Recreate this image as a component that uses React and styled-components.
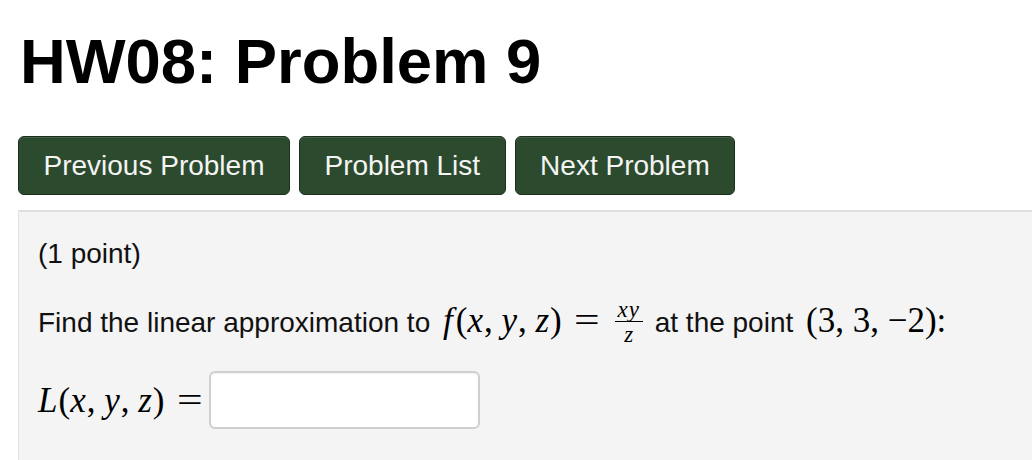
import React from "react";
import styled, { createGlobalStyle } from "styled-components";

const Global = createGlobalStyle`
  html, body { margin: 0; padding: 0; background: #ffffff; }
  body { overflow: hidden; font-family: "Liberation Sans", Arial, sans-serif; }
`;

const Page = styled.div`
  width: 1032px;
  height: 460px;
  padding-left: 18px;
  box-sizing: border-box;
  display: flex;
  flex-direction: column;
`;

const Title = styled.h1`
  margin: 29px 0 0 2px;
  font-size: 63.4px;
  line-height: 64px;
  font-weight: 700;
  color: #000;
`;

const Nav = styled.div`
  display: flex;
  gap: 9px;
  margin-top: 43px;
`;

const NavButton = styled.button`
  font-family: "Liberation Sans", Arial, sans-serif;
  font-size: 28px;
  line-height: 39px;
  height: 59px;
  padding: 9px 24.5px;
  box-sizing: border-box;
  color: #f4f4f4;
  background: #2c4a2e;
  border: 1px solid #1c301d;
  border-radius: 6px;
  box-shadow: inset 0 1px 0 rgba(255, 255, 255, 0.12);
`;

const Panel = styled.div`
  margin-top: 15px;
  flex: 1;
  background: #f4f4f4;
  border-top: 2px solid #e0e0e0;
  border-left: 1px solid #e4e4e4;
  padding: 22px 0 0 19px;
  font-size: 28px;
  line-height: 39px;
  color: #111;
`;

const Para = styled.div`
  margin-top: ${(p) => p.$mt || 0}px;
  display: flex;
  align-items: ${(p) => (p.$center ? "center" : "baseline")};
  white-space: pre;
`;

const Math = styled.span`
  font-family: "Liberation Serif", "Times New Roman", serif;
  font-size: 35px;
  color: #000;
  margin-left: ${(p) => p.$ml || 0}px;
  display: inline-flex;
  align-items: baseline;
`;

const I = styled.i`
  font-style: italic;
  margin-right: ${(p) => p.$r || 0}px;
`;

const Rel = styled.span`
  display: inline-block;
  margin: 0 ${(p) => (p.$r !== undefined ? p.$r : 14)}px 0 15px;
  transform: scaleX(1.3);
`;

const Frac = styled.span`
  display: inline-flex;
  flex-direction: column;
  align-items: center;
  font-size: 23px;
  line-height: 17px;
  margin: 0 4px 0 4px;
  transform: translateY(-15px);
`;

const Num = styled.span`
  font-style: italic;
  padding: 0 3px 3px;
  border-bottom: 1.5px solid #000;
  letter-spacing: 1px;
`;

const Den = styled.span`
  font-style: italic;
  padding-top: 4px;
`;

const AnswerInput = styled.input`
  width: 271px;
  height: 58px;
  box-sizing: border-box;
  margin-left: 0;
  background: #fff;
  border: 2px solid #cfcfcf;
  border-radius: 6px;
  box-shadow: inset 0 1px 2px rgba(0, 0, 0, 0.06);
  outline: none;
`;

const Vars = () => (
  <>
    (<I $r={1}>x</I>,<span> </span><I $r={1}>y</I>,<span> </span><I $r={1}>z</I>)
  </>
);

export default function App() {
  return (
    <>
      <Global />
      <Page>
        <Title>HW08: Problem 9</Title>
        <Nav>
          <NavButton>Previous Problem</NavButton>
          <NavButton>Problem List</NavButton>
          <NavButton>Next Problem</NavButton>
        </Nav>
        <Panel>
          <Para>(1 point)</Para>
          <Para $mt={28}>
            <span>Find the linear approximation to </span>
            <Math $ml={5}>
              <I $r={3}>f</I>
              <Vars />
              <Rel>=</Rel>
              <Frac>
                <Num>xy</Num>
                <Den>z</Den>
              </Frac>
            </Math>
            <span> at the point </span>
            <Math $ml={5}>(3, 3, −2):</Math>
          </Para>
          <Para $mt={13} $center>
            <Math>
              <I $r={1}>L</I>
              <Vars />
              <Rel $r={10}>=</Rel>
            </Math>
            <AnswerInput type="text" />
          </Para>
        </Panel>
      </Page>
    </>
  );
}
